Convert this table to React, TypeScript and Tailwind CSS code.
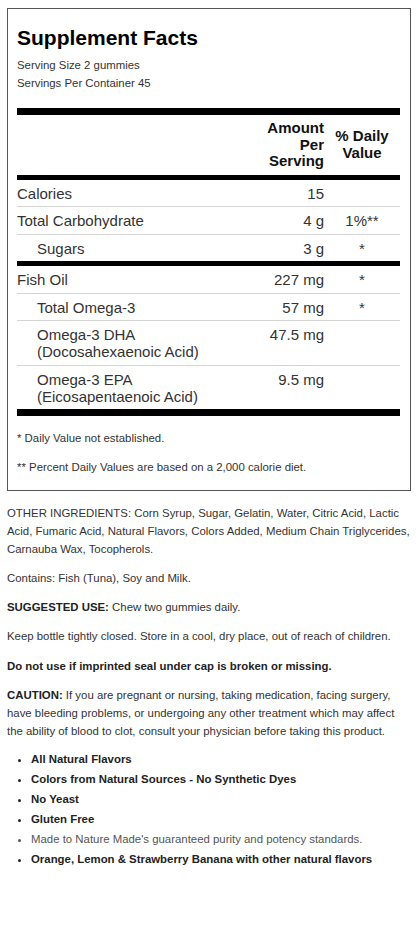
import React from 'react';

const rows = [
  { name: 'Calories', amount: '15', dv: '', indent: false, bar: false },
  { name: 'Total Carbohydrate', amount: '4 g', dv: '1%**', indent: false, bar: false },
  { name: 'Sugars', amount: '3 g', dv: '*', indent: true, bar: true },
  { name: 'Fish Oil', amount: '227 mg', dv: '*', indent: false, bar: false },
  { name: 'Total Omega-3', amount: '57 mg', dv: '*', indent: true, bar: false },
  { name: 'Omega-3 DHA', sub: '(Docosahexaenoic Acid)', amount: '47.5 mg', dv: '', indent: true, bar: false },
  { name: 'Omega-3 EPA', sub: '(Eicosapentaenoic Acid)', amount: '9.5 mg', dv: '', indent: true, bar: true, last: true },
];

const bullets = [
  { text: 'All Natural Flavors', bold: true },
  { text: 'Colors from Natural Sources - No Synthetic Dyes', bold: true },
  { text: 'No Yeast', bold: true },
  { text: 'Gluten Free', bold: true },
  { text: "Made to Nature Made's guaranteed purity and potency standards.", bold: false },
  { text: 'Orange, Lemon & Strawberry Banana with other natural flavors', bold: true },
];

const App = () => {
  return (
    <div className="w-[416px] min-h-[928px] bg-white font-['Liberation_Sans',Arial,sans-serif] text-[#333]">
      <div className="pt-2 pl-[7px] pr-[5px]">
        {/* Facts box */}
        <div className="border border-[#555] pl-[9px] pr-[10px] pt-[17px] pb-[15px]">
          <h1 className="text-[21px] font-bold leading-[24px] text-black">Supplement Facts</h1>
          <p className="text-[11.4px] leading-[18px] mt-[6px]">Serving Size 2 gummies</p>
          <p className="text-[11.4px] leading-[18px]">Servings Per Container 45</p>

          <div className="h-[7px] bg-black mt-[16px]"></div>

          {/* Header */}
          <div className="grid grid-cols-[1fr_76px] text-[15px] font-bold leading-[16.5px] text-[#111] pt-[5px] pb-[5px]">
            <div className="text-right">
              Amount
              <br />
              Per
              <br />
              Serving
            </div>
            <div className="flex items-center justify-center text-center">
              % Daily
              <br />
              Value
            </div>
          </div>
          <div className="h-[5px] bg-black"></div>

          {/* Rows */}
          {rows.map((r, i) => (
            <div key={i}>
              <div
                className={`grid grid-cols-[1fr_76px] text-[15px] leading-[17px] pt-[5px] pb-[4.5px] ${
                  r.bar ? '' : 'border-b border-[#d4d4d4]'
                }`}
              >
                <div className="flex justify-between">
                  <div className={r.indent ? 'pl-[20px]' : ''}>
                    {r.name}
                    {r.sub && (
                      <>
                        <br />
                        {r.sub}
                      </>
                    )}
                  </div>
                  <div className="text-right">{r.amount}</div>
                </div>
                <div className="text-center">{r.dv}</div>
              </div>
              {r.bar && <div className={`${r.last ? 'h-[7px]' : 'h-[5px]'} bg-black`}></div>}
            </div>
          ))}

          {/* Footnotes */}
          <p className="text-[11.4px] leading-[16px] mt-[14px]">* Daily Value not established.</p>
          <p className="text-[11.4px] leading-[16px] mt-[13px]">** Percent Daily Values are based on a 2,000 calorie diet.</p>
        </div>

        {/* Text below */}
        <div className="text-[11.4px] leading-[18px] pt-[13px]">
          <p>
            OTHER INGREDIENTS: Corn Syrup, Sugar, Gelatin, Water, Citric Acid, Lactic Acid, Fumaric Acid, Natural
            Flavors, Colors Added, Medium Chain Triglycerides, Carnauba Wax, Tocopherols.
          </p>
          <p className="mt-[11px]">Contains: Fish (Tuna), Soy and Milk.</p>
          <p className="mt-[11px]">
            <span className="font-bold text-[#222]">SUGGESTED USE:</span> Chew two gummies daily.
          </p>
          <p className="mt-[11px]">Keep bottle tightly closed. Store in a cool, dry place, out of reach of children.</p>
          <p className="mt-[12px] font-bold text-[#222]">Do not use if imprinted seal under cap is broken or missing.</p>
          <p className="mt-[11px]">
            <span className="font-bold text-[#222]">CAUTION:</span> If you are pregnant or nursing, taking medication,
            facing surgery, have bleeding problems, or undergoing any other treatment which may affect the ability of
            blood to clot, consult your physician before taking this product.
          </p>

          <ul className="list-disc pl-[24px] mt-[9px]">
            {bullets.map((b) => (
              <li
                key={b.text}
                className={`leading-[20px] ${b.bold ? 'font-bold text-[#222]' : 'text-[#555]'}`}
              >
                {b.text}
              </li>
            ))}
          </ul>
        </div>
      </div>
    </div>
  );
};

export default App;
